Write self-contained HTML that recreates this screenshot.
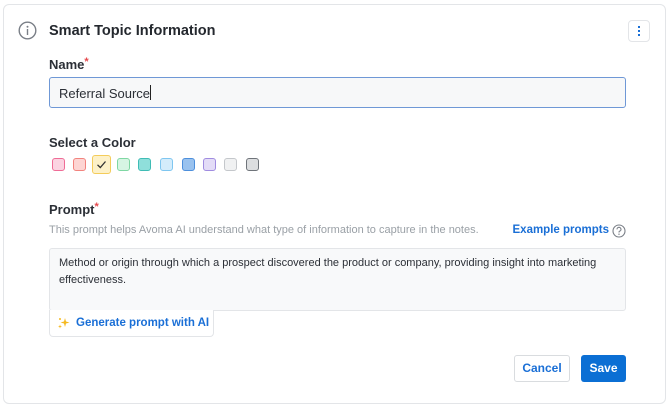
<!DOCTYPE html>
<html><head><style>
*{box-sizing:border-box;margin:0;padding:0}
body{width:670px;height:408px;background:#fff;font-family:"Liberation Sans",sans-serif;position:relative;overflow:hidden;color:#2b2f36}
.card{position:absolute;left:3px;top:4px;width:663px;height:400px;border:1px solid #e3e5e8;border-radius:6px}
.abs{position:absolute}
.t{position:absolute;white-space:nowrap}
.sw{position:absolute;top:158px;width:13px;height:13px;border-radius:3px;border:1.5px solid}
.req{color:#e5484d;font-size:11px;vertical-align:top;position:relative;top:-1px}
</style></head><body>
<div class="card"></div>
<svg class="abs" style="left:18px;top:21px" width="19" height="19" viewBox="0 0 19 19"><circle cx="9.5" cy="9.5" r="8.3" fill="none" stroke="#7a7f87" stroke-width="1.4"/><circle cx="9.5" cy="5.8" r="1" fill="#7a7f87"/><rect x="8.8" y="8" width="1.4" height="6" fill="#7a7f87"/></svg>
<div class="t" style="left:49px;top:23px;font-size:14.5px;font-weight:bold;color:#24282e">Smart Topic Information</div>
<div class="abs" style="left:628px;top:20px;width:22px;height:22px;border:1px solid #e3e5e8;border-radius:4px"></div>
<div class="abs" style="left:638px;top:26px;width:2px;height:2px;background:#1a6fd6;box-shadow:0 4px 0 #1a6fd6,0 8px 0 #1a6fd6"></div>
<div class="t" style="left:49px;top:57px;font-size:13px;font-weight:bold">Name<span class="req">*</span></div>
<div class="abs" style="left:49px;top:77px;width:577px;height:31px;border:1px solid #6f98d6;border-radius:3px;background:#f7f8f9"></div>
<div class="t" style="left:59px;top:85px;font-size:13px;color:#2b2f36">Referral Source<span style="display:inline-block;width:1px;height:15px;background:#222;vertical-align:-2px"></span></div>
<div class="t" style="left:49px;top:135px;font-size:13px;font-weight:bold">Select a Color</div>
<div class="sw" style="left:52px;background:#fbd3e1;border-color:#ef6c96"></div>
<div class="sw" style="left:73px;background:#fdd5d3;border-color:#f2837e"></div>
<div class="sw" style="left:92px;top:155px;width:19px;height:19px;background:#fdf1c8;border-color:#f4cc5a"></div>
<svg class="abs" style="left:96px;top:159px" width="11" height="11" viewBox="0 0 11 11"><path d="M1.5 5.8L4.3 8.5L9.5 2.5" fill="none" stroke="#333" stroke-width="1.3"/></svg>
<div class="sw" style="left:117px;background:#d6f5e3;border-color:#7fd7a3"></div>
<div class="sw" style="left:138px;background:#8fdfdb;border-color:#3fbcb5"></div>
<div class="sw" style="left:160px;background:#d4ecfb;border-color:#7fc6f0"></div>
<div class="sw" style="left:182px;background:#99c2ef;border-color:#4d8fdc"></div>
<div class="sw" style="left:203px;background:#e3dcf7;border-color:#a08ce0"></div>
<div class="sw" style="left:224px;background:#f0f1f2;border-color:#c4c7cb"></div>
<div class="sw" style="left:246px;background:#dcdee0;border-color:#6f747a"></div>
<div class="t" style="left:49px;top:202px;font-size:13px;font-weight:bold">Prompt<span class="req">*</span></div>
<div class="t" style="left:49px;top:224px;font-size:11px;color:#9aa0a6">This prompt helps Avoma AI understand what type of information to capture in the notes.</div>
<div class="t" style="right:61px;top:224px;font-size:11.5px;font-weight:bold;color:#1a6fd6">Example prompts</div>
<svg class="abs" style="left:612px;top:224px" width="14" height="14" viewBox="0 0 14 14"><circle cx="7" cy="7" r="6" fill="none" stroke="#7a7f87" stroke-width="1.1"/><path d="M5 5.4A2 2 0 1 1 7.4 7.3C7 7.5 7 7.9 7 8.5" fill="none" stroke="#7a7f87" stroke-width="1.1"/><circle cx="7" cy="10.2" r=".7" fill="#7a7f87"/></svg>
<div class="abs" style="left:49px;top:248px;width:577px;height:63px;border:1px solid #e3e5e8;border-radius:3px;background:#f8f9fa"></div>
<div class="abs" style="left:59px;top:255px;width:560px;font-size:11px;line-height:17px;color:#2b2f36">Method or origin through which a prospect discovered the product or company, providing insight into marketing effectiveness.</div>
<div class="abs" style="left:49px;top:310px;width:165px;height:27px;border:1px solid #e3e5e8;border-top:none;border-radius:0 0 4px 4px;background:#fff"></div>
<svg class="abs" style="left:57px;top:316px" width="14" height="14" viewBox="0 0 14 14"><path d="M8 2L9 5.5L12.5 6.5L9 7.5L8 11L7 7.5L3.5 6.5L7 5.5Z" fill="#f5b921"/><path d="M3 8.5L3.5 10L5 10.5L3.5 11L3 12.5L2.5 11L1 10.5L2.5 10Z" fill="#f5b921"/><circle cx="3" cy="3" r="1" fill="#f5b921"/></svg>
<div class="t" style="left:76px;top:317px;font-size:11.5px;font-weight:bold;color:#1a6fd6">Generate prompt with AI</div>
<div class="abs" style="left:514px;top:355px;width:56px;height:27px;border:1px solid #d9dcdf;border-radius:3px;font-size:12px;font-weight:bold;color:#1a6fd6;text-align:center;line-height:25px">Cancel</div>
<div class="abs" style="left:581px;top:355px;width:45px;height:27px;background:#0b6fd4;border-radius:3px;font-size:12px;font-weight:bold;color:#fff;text-align:center;line-height:27px">Save</div>
</body></html>
